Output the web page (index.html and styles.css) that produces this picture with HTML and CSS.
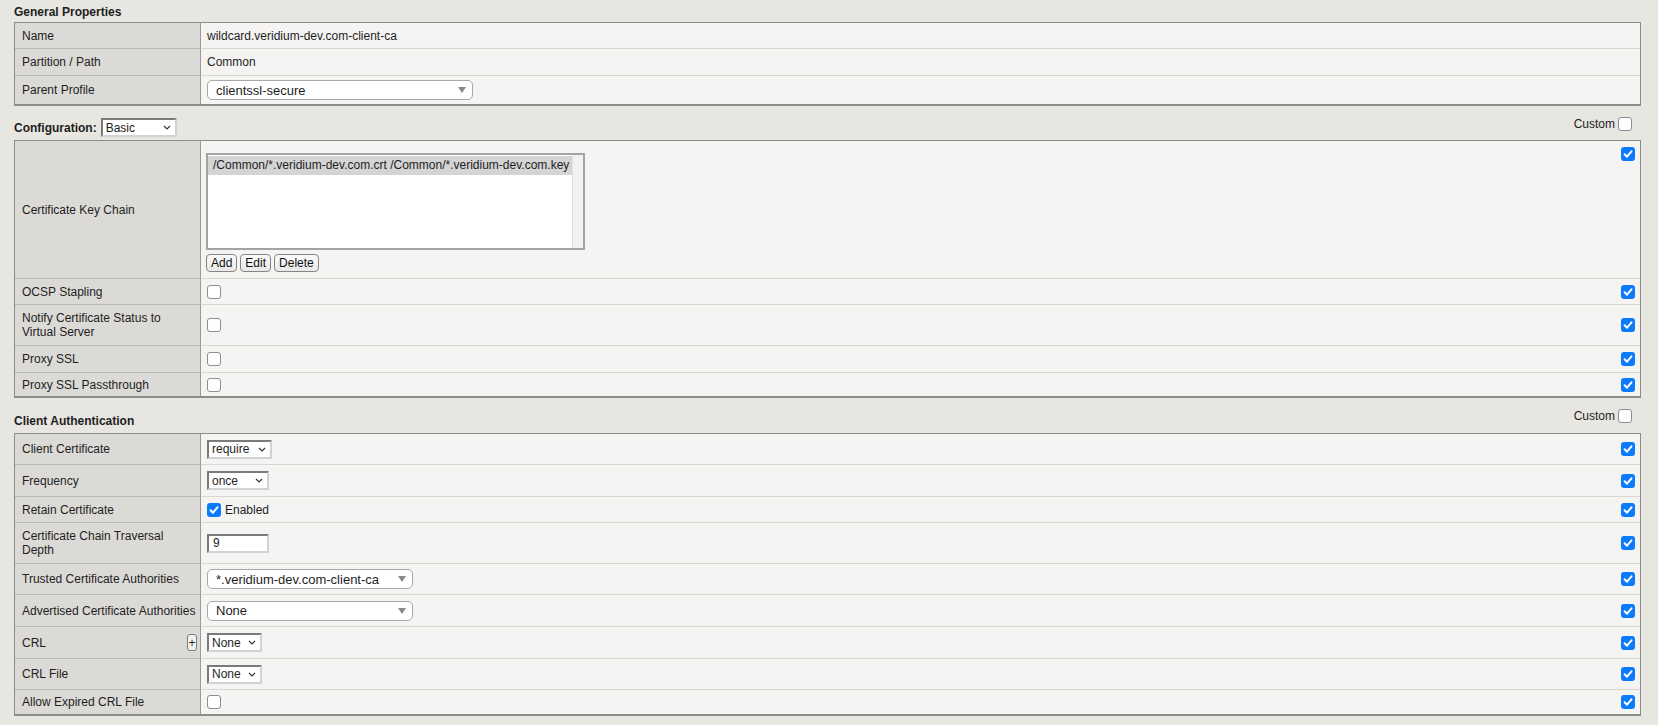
FILE: index.html
```html
<!DOCTYPE html>
<html lang="en">
<head>
    <meta charset="UTF-8">
    <title>Client SSL Profile - wildcard.veridium-dev.com-client-ca</title>
    <link rel="stylesheet" href="styles.css">
</head>
<body>
<div class="page">

    <!-- General Properties -->
    <div class="section-title">General Properties</div>
    <div class="props">
        <div class="row h25">
            <div class="label">Name</div>
            <div class="value">wildcard.veridium-dev.com-client-ca</div>
        </div>
        <div class="row h27">
            <div class="label">Partition / Path</div>
            <div class="value">Common</div>
        </div>
        <div class="row h29">
            <div class="label">Parent Profile</div>
            <div class="value">
                <div class="dropdown w266">
                    <span>clientssl-secure</span>
                    <svg class="tri" viewBox="0 0 8 6"><path d="M0 0H8L4 6Z"/></svg>
                </div>
            </div>
        </div>
    </div>

    <!-- Configuration -->
    <div class="bar bar-config">
        <div class="bar-left">
            <span class="bar-title">Configuration:</span>
            <div class="choice w75">
                <span>Basic</span>
                <svg class="chev" viewBox="0 0 8 5"><path d="M1 1L4 4L7 1"/></svg>
            </div>
        </div>
        <div class="custom">Custom <span class="cb"></span></div>
    </div>
    <div class="props">
        <div class="row h137 top">
            <div class="label">Certificate Key Chain</div>
            <div class="value chain">
                <div class="listbox">
                    <div class="list-items">
                        <div class="list-item selected">/Common/*.veridium-dev.com.crt /Common/*.veridium-dev.com.key</div>
                    </div>
                    <div class="list-gutter"></div>
                </div>
                <div class="buttons">
                    <button class="btn">Add</button>
                    <button class="btn">Edit</button>
                    <button class="btn">Delete</button>
                </div>
            </div>
            <div class="flag"><span class="cb on"><svg viewBox="0 0 14 14"><path d="M3.6 7.3L6 9.7L10.5 4.3"/></svg></span></div>
        </div>
        <div class="row h26">
            <div class="label">OCSP Stapling</div>
            <div class="value"><span class="cb"></span></div>
            <div class="flag"><span class="cb on"><svg viewBox="0 0 14 14"><path d="M3.6 7.3L6 9.7L10.5 4.3"/></svg></span></div>
        </div>
        <div class="row h41">
            <div class="label">Notify Certificate Status to Virtual Server</div>
            <div class="value"><span class="cb"></span></div>
            <div class="flag"><span class="cb on"><svg viewBox="0 0 14 14"><path d="M3.6 7.3L6 9.7L10.5 4.3"/></svg></span></div>
        </div>
        <div class="row h27">
            <div class="label">Proxy SSL</div>
            <div class="value"><span class="cb"></span></div>
            <div class="flag"><span class="cb on"><svg viewBox="0 0 14 14"><path d="M3.6 7.3L6 9.7L10.5 4.3"/></svg></span></div>
        </div>
        <div class="row h24">
            <div class="label">Proxy SSL Passthrough</div>
            <div class="value"><span class="cb"></span></div>
            <div class="flag"><span class="cb on"><svg viewBox="0 0 14 14"><path d="M3.6 7.3L6 9.7L10.5 4.3"/></svg></span></div>
        </div>
    </div>

    <!-- Client Authentication -->
    <div class="bar bar-auth">
        <span class="bar-title">Client Authentication</span>
        <div class="custom">Custom <span class="cb"></span></div>
    </div>
    <div class="props">
        <div class="row h30">
            <div class="label">Client Certificate</div>
            <div class="value">
                <div class="choice w65">
                    <span>require</span>
                    <svg class="chev" viewBox="0 0 8 5"><path d="M1 1L4 4L7 1"/></svg>
                </div>
            </div>
            <div class="flag"><span class="cb on"><svg viewBox="0 0 14 14"><path d="M3.6 7.3L6 9.7L10.5 4.3"/></svg></span></div>
        </div>
        <div class="row h32">
            <div class="label">Frequency</div>
            <div class="value">
                <div class="choice w62">
                    <span>once</span>
                    <svg class="chev" viewBox="0 0 8 5"><path d="M1 1L4 4L7 1"/></svg>
                </div>
            </div>
            <div class="flag"><span class="cb on"><svg viewBox="0 0 14 14"><path d="M3.6 7.3L6 9.7L10.5 4.3"/></svg></span></div>
        </div>
        <div class="row h26">
            <div class="label">Retain Certificate</div>
            <div class="value">
                <span class="cb on"><svg viewBox="0 0 14 14"><path d="M3.6 7.3L6 9.7L10.5 4.3"/></svg></span>
                <span class="cb-text">Enabled</span>
            </div>
            <div class="flag"><span class="cb on"><svg viewBox="0 0 14 14"><path d="M3.6 7.3L6 9.7L10.5 4.3"/></svg></span></div>
        </div>
        <div class="row h40">
            <div class="label">Certificate Chain Traversal Depth</div>
            <div class="value"><div class="textbox w62">9</div></div>
            <div class="flag"><span class="cb on"><svg viewBox="0 0 14 14"><path d="M3.6 7.3L6 9.7L10.5 4.3"/></svg></span></div>
        </div>
        <div class="row h31">
            <div class="label">Trusted Certificate Authorities</div>
            <div class="value">
                <div class="dropdown w206">
                    <span>*.veridium-dev.com-client-ca</span>
                    <svg class="tri" viewBox="0 0 8 6"><path d="M0 0H8L4 6Z"/></svg>
                </div>
            </div>
            <div class="flag"><span class="cb on"><svg viewBox="0 0 14 14"><path d="M3.6 7.3L6 9.7L10.5 4.3"/></svg></span></div>
        </div>
        <div class="row h32">
            <div class="label nowrap">Advertised Certificate Authorities</div>
            <div class="value">
                <div class="dropdown w206">
                    <span>None</span>
                    <svg class="tri" viewBox="0 0 8 6"><path d="M0 0H8L4 6Z"/></svg>
                </div>
            </div>
            <div class="flag"><span class="cb on"><svg viewBox="0 0 14 14"><path d="M3.6 7.3L6 9.7L10.5 4.3"/></svg></span></div>
        </div>
        <div class="row h32">
            <div class="label label-split">CRL <span class="plus">+</span></div>
            <div class="value">
                <div class="choice w55">
                    <span>None</span>
                    <svg class="chev" viewBox="0 0 8 5"><path d="M1 1L4 4L7 1"/></svg>
                </div>
            </div>
            <div class="flag"><span class="cb on"><svg viewBox="0 0 14 14"><path d="M3.6 7.3L6 9.7L10.5 4.3"/></svg></span></div>
        </div>
        <div class="row h31">
            <div class="label">CRL File</div>
            <div class="value">
                <div class="choice w55">
                    <span>None</span>
                    <svg class="chev" viewBox="0 0 8 5"><path d="M1 1L4 4L7 1"/></svg>
                </div>
            </div>
            <div class="flag"><span class="cb on"><svg viewBox="0 0 14 14"><path d="M3.6 7.3L6 9.7L10.5 4.3"/></svg></span></div>
        </div>
        <div class="row h25">
            <div class="label">Allow Expired CRL File</div>
            <div class="value"><span class="cb"></span></div>
            <div class="flag"><span class="cb on"><svg viewBox="0 0 14 14"><path d="M3.6 7.3L6 9.7L10.5 4.3"/></svg></span></div>
        </div>
    </div>

</div>
</body>
</html>
```

FILE: styles.css
```css
body {
    margin: 0;
    background-color: #e7e6e1;
    font-family: "Liberation Sans", Arial, sans-serif;
    font-size: 12px;
    color: #1e1e1e;
}
.page {
    width: 1627px;
    padding-left: 14px;
}
.section-title {
    height: 22px;
    padding-top: 5px;
    box-sizing: border-box;
    font-weight: bold;
    line-height: 14px;
}

/* property tables */
.props {
    border: 1px solid #8c8c8c;
    border-bottom-width: 2px;
    background: #f5f4f2;
}
.row {
    display: flex;
}
.row > div {
    box-sizing: border-box;
}
.row + .row .label {
    border-top: 1px solid #b9b7b3;
}
.row + .row .value,
.row + .row .flag {
    border-top: 1px solid #d7d6d3;
}
.h24 { height: 24px; }
.h25 { height: 25px; }
.h26 { height: 26px; }
.h27 { height: 27px; }
.h29 { height: 29px; }
.h30 { height: 30px; }
.h31 { height: 31px; }
.h32 { height: 32px; }
.h40 { height: 41px; }
.h41 { height: 41px; }
.h137 { height: 137px; }
.label {
    width: 186px;
    flex: none;
    background: #dcdad6;
    border-right: 1px solid #999;
    padding: 0 6px 0 7px;
    display: flex;
    align-items: center;
    line-height: 14px;
}
.label.nowrap {
    white-space: nowrap;
    padding-right: 0;
}
.label-split {
    justify-content: space-between;
    padding-right: 3px;
}
.value {
    flex: 1;
    display: flex;
    align-items: center;
    padding-left: 6px;
}
.flag {
    width: 30px;
    flex: none;
    display: flex;
    align-items: center;
    justify-content: flex-end;
    padding-right: 5px;
}
.top .flag {
    align-items: flex-start;
    padding-top: 6px;
}

/* certificate key chain */
.chain {
    flex-direction: column;
    align-items: flex-start;
    justify-content: flex-start;
    padding-top: 12px;
    padding-left: 5px;
}
.listbox {
    width: 379px;
    height: 97px;
    box-sizing: border-box;
    border: 2px solid #a3a3a3;
    background: #fff;
    display: flex;
}
.list-items {
    flex: 1;
    padding-top: 1px;
}
.list-item {
    height: 19px;
    line-height: 19px;
    padding-left: 5px;
    white-space: nowrap;
}
.list-item.selected {
    background: #d4d4d4;
}
.list-gutter {
    width: 10px;
    background: #f1f1f1;
    border-left: 1px solid #e2e2e2;
}
.buttons {
    display: flex;
    gap: 3px;
    margin-top: 4px;
}
.btn {
    height: 18px;
    padding: 0 4px;
    font-family: inherit;
    font-size: 12px;
    color: #111;
    background: linear-gradient(#fafafa, #e9e9e9);
    border: 1px solid #858585;
    border-radius: 4px;
}

/* checkboxes */
.cb {
    display: inline-block;
    width: 14px;
    height: 14px;
    box-sizing: border-box;
    border: 1.5px solid #8d8d92;
    border-radius: 3px;
    background: #fff;
    flex: none;
}
.cb.on {
    border: 0;
    background: #0b7bfe;
}
.cb svg {
    display: block;
    width: 14px;
    height: 14px;
    fill: none;
    stroke: #fff;
    stroke-width: 2;
    stroke-linecap: round;
    stroke-linejoin: round;
}
.cb-text {
    margin-left: 4px;
}

/* selects */
.dropdown {
    height: 20px;
    box-sizing: border-box;
    display: flex;
    align-items: center;
    justify-content: space-between;
    padding: 0 6px 0 8px;
    background: #fff;
    border: 1px solid #a8a8a8;
    border-radius: 5px;
    font-size: 13px;
}
.tri {
    width: 8px;
    height: 6px;
    fill: #8a8a8a;
}
.w266 { width: 266px; }
.w206 { width: 206px; }
.choice,
.textbox {
    height: 19px;
    box-sizing: border-box;
    display: flex;
    align-items: center;
    background: #fff;
    border: 2px solid;
    border-color: #7a7a7a #d2d2d2 #d2d2d2 #7a7a7a;
    padding: 0 4px 0 3px;
}
.choice {
    justify-content: space-between;
}
.textbox {
    padding-left: 4px;
}
.chev {
    width: 8px;
    height: 5px;
    fill: none;
    stroke: #333;
    stroke-width: 1.2;
}
.w75 { width: 76px; }
.w65 { width: 65px; }
.w62 { width: 62px; }
.w55 { width: 55px; }

.plus {
    width: 10px;
    height: 17px;
    box-sizing: border-box;
    border: 1px solid #7d7d7d;
    border-radius: 3px;
    background: #f2f2f2;
    display: flex;
    align-items: center;
    justify-content: center;
    font-size: 12px;
    line-height: 1;
}

/* section bars */
.bar {
    display: flex;
    align-items: flex-end;
    justify-content: space-between;
    box-sizing: border-box;
    padding-right: 9px;
}
.bar-config {
    height: 34px;
    padding-bottom: 3px;
}
.bar-auth {
    height: 35px;
    padding-bottom: 5px;
}
.bar-left {
    display: flex;
    align-items: flex-end;
    gap: 4px;
}
.bar-config .bar-title {
    padding-bottom: 2px;
}
.bar-config .custom {
    margin-bottom: 6px;
}
.bar-title {
    font-weight: bold;
    line-height: 14px;
}
.custom {
    display: flex;
    align-items: center;
    gap: 3px;
}
.bar-auth .custom {
    margin-bottom: 5px;
}
```
